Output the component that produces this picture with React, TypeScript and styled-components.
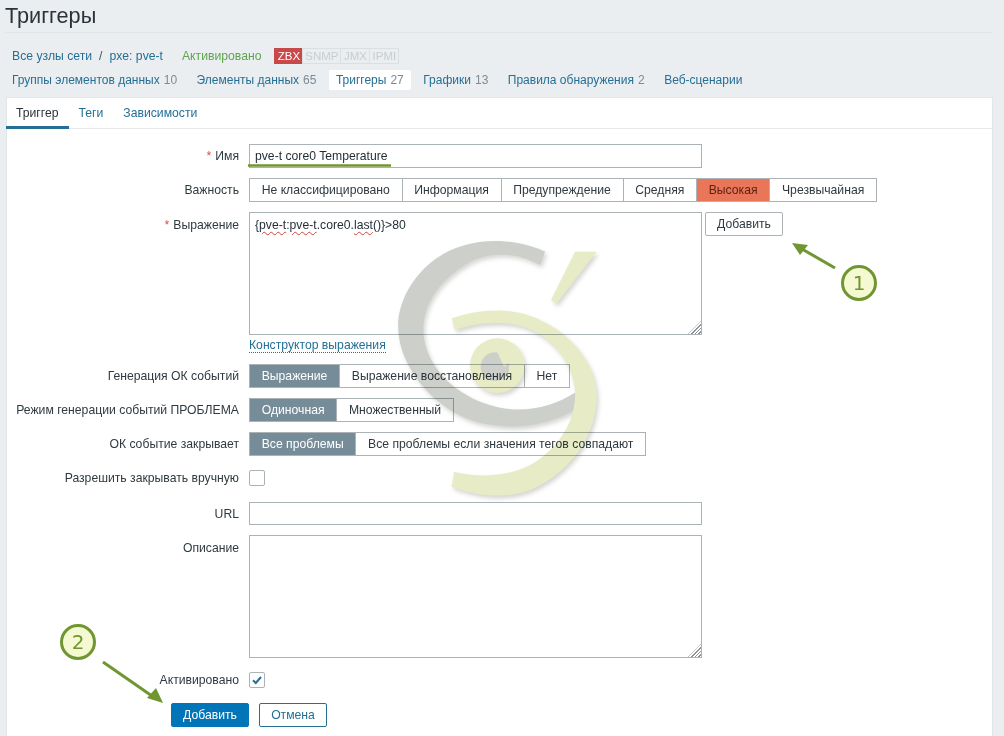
import styled, { createGlobalStyle } from 'styled-components';

const GlobalStyle = createGlobalStyle`
  html, body {
    margin: 0;
    height: 736px;
    overflow: hidden;
    background: #ebeef0;
    font-family: 'Liberation Sans', Arial, sans-serif;
    font-size: 12.2px;
    color: #1f2c33;
  }
`;

const Page = styled.div`
  position: relative;
  width: 1004px;
  height: 736px;
  overflow: hidden;
  padding-inline: 6px 11px;
  box-sizing: border-box;
`;

const Title = styled.h1`
  margin: 0 0 0 -1px;
  height: 33px;
  padding-top: 4px;
  box-sizing: border-box;
  font-size: 21.7px;
  line-height: 24px;
  font-weight: 400;
  color: #2b3338;
  border-bottom: 1px solid #e1e5e8;
`;

const HostRow = styled.div`
  display: flex;
  align-items: center;
  height: 16px;
  margin-top: 15px;
  padding-left: 6px;
`;

const NavLink = styled.a`
  color: #256f94;
  white-space: nowrap;
`;

const Separator = styled.span`
  margin-inline: 7px;
  color: #45525a;
`;

const Status = styled.span`
  margin-left: 19px;
  color: #5fa450;
`;

const Availability = styled.div`
  display: flex;
  margin-left: 13px;
`;

const Badge = styled.span<{ $on?: boolean; $width: number }>`
  width: ${({ $width }) => $width}px;
  height: 16px;
  box-sizing: border-box;
  display: flex;
  align-items: center;
  justify-content: center;
  font-size: 11.5px;
  color: ${({ $on }) => ($on ? '#ffffff' : '#c8cdd0')};
  background: ${({ $on }) => ($on ? '#c9484a' : 'transparent')};
  border: 1px solid ${({ $on }) => ($on ? '#c9484a' : '#dadfe2')};
  margin-left: ${({ $on }) => ($on ? 0 : -1)}px;
`;

const SubNav = styled.div`
  display: flex;
  gap: 5.5px;
  height: 20px;
  margin-top: 6px;
  margin-left: -1px;
  font-size: 12px;
`;

const SubNavItem = styled.div<{ $active?: boolean }>`
  display: flex;
  align-items: center;
  gap: 4px;
  padding-inline: 7px;
  border-radius: 2px;
  white-space: nowrap;
  background: ${({ $active }) => ($active ? '#ffffff' : 'transparent')};
`;

const Count = styled.span`
  color: #7d8b93;
`;

const Panel = styled.div`
  margin-top: 7px;
  height: 639px;
  background: #ffffff;
  border: 1px solid #e2e6e9;
  border-bottom: 0;
  box-sizing: border-box;
`;

const PanelTabs = styled.div`
  display: flex;
  height: 31px;
  margin-left: -1px;
  border-bottom: 1px solid #e6e9eb;
  box-sizing: border-box;
`;

const PanelTab = styled.a<{ $active?: boolean }>`
  display: flex;
  align-items: center;
  padding: 1px 10px 0;
  margin-bottom: -1px;
  color: ${({ $active }) => ($active ? '#2b3338' : '#256f94')};
  border-bottom: 3px solid ${({ $active }) => ($active ? '#256f94' : 'transparent')};
`;

const Form = styled.div`
  display: grid;
  grid-template-columns: 223px 1fr;
  column-gap: 10px;
  padding: 15px 0 0 9px;
`;

const Label = styled.div<{ $top?: boolean }>`
  height: 24px;
  padding-top: ${({ $top }) => ($top ? 6 : 0)}px;
  box-sizing: border-box;
  display: flex;
  align-items: ${({ $top }) => ($top ? 'flex-start' : 'center')};
  justify-content: flex-end;
  white-space: nowrap;
  color: #2f3a40;
`;

const Required = styled.span`
  color: #d9534f;
  margin-right: 4px;
`;

const Field = styled.div<{ $after?: number }>`
  margin-bottom: ${({ $after }) => $after ?? 10}px;
  min-width: 0;
`;

const TextInput = styled.input<{ $height?: number }>`
  display: block;
  width: 453px;
  height: ${({ $height }) => $height ?? 24}px;
  box-sizing: border-box;
  padding: 0 5px;
  border: 1px solid #acb3b7;
  border-radius: 0;
  font: inherit;
  color: #1f2c33;
  background: #ffffff;
  outline: none;
`;

const ExpressionRow = styled.div`
  display: flex;
  align-items: flex-start;
  gap: 3px;
`;

const AreaBox = styled.div`
  position: relative;
  width: 453px;
  height: 123px;
  box-sizing: border-box;
  padding: 5px;
  border: 1px solid #acb3b7;
  line-height: 14px;
  background: #ffffff;

  &::after {
    content: '';
    position: absolute;
    right: 0;
    bottom: 0;
    width: 13px;
    height: 13px;
    clip-path: polygon(100% 0, 100% 100%, 0 100%);
    background: repeating-linear-gradient(135deg, #8d9397 0 1.3px, #ffffff 1.3px 2.7px);
  }
`;

const Misspelt = styled.span`
  text-decoration: underline wavy #d0453c 1px;
  text-underline-offset: 2px;
`;

const BuilderLink = styled.a`
  display: inline-block;
  margin-top: 3px;
  line-height: 14px;
  color: #256f94;
  border-bottom: 1px dotted #256f94;
`;

const Segmented = styled.div`
  display: inline-flex;
  height: 24px;
  border: 1px solid #acb3b7;
  box-sizing: border-box;
  vertical-align: top;
`;

const Segment = styled.div<{ $selected?: 'blue' | 'high' }>`
  display: flex;
  align-items: center;
  padding-inline: 11.7px;
  white-space: nowrap;
  border-left: 1px solid #acb3b7;
  color: ${({ $selected }) =>
    $selected === 'blue' ? '#ffffff' : $selected === 'high' ? '#5c1f10' : '#2f3a40'};
  background: ${({ $selected }) =>
    $selected === 'blue' ? '#768d99' : $selected === 'high' ? '#e97659' : 'transparent'};

  &:first-child {
    border-left: 0;
  }
`;

const Button = styled.button<{ $variant?: 'primary' | 'outline' }>`
  height: 24px;
  padding: 0;
  width: ${({ $variant }) => ($variant === 'outline' ? 68 : 78)}px;
  font: inherit;
  border-radius: 2px;
  border: 1px solid
    ${({ $variant }) =>
      $variant === 'primary' ? '#0275b8' : $variant === 'outline' ? '#256f94' : '#acb3b7'};
  color: ${({ $variant }) =>
    $variant === 'primary' ? '#ffffff' : $variant === 'outline' ? '#256f94' : '#2f3a40'};
  background: ${({ $variant }) => ($variant === 'primary' ? '#0275b8' : '#ffffff')};
`;

const CheckBox = styled.div`
  width: 16px;
  height: 16px;
  margin-top: 4px;
  box-sizing: border-box;
  display: flex;
  align-items: center;
  justify-content: center;
  border: 1px solid #acb3b7;
  border-radius: 2px;
  background: #ffffff;
`;

const Actions = styled.div`
  display: flex;
  gap: 10px;
  margin-left: 155px;
  margin-top: 5px;
  grid-column: 1 / -1;
`;

const Watermark = styled.svg`
  position: absolute;
  left: 380px;
  top: 220px;
  mix-blend-mode: multiply;
  pointer-events: none;
  filter: drop-shadow(2px 3px 2px rgba(90, 92, 84, 0.25));
`;

const Annotations = styled.svg`
  position: absolute;
  left: 0;
  top: 0;
  pointer-events: none;
`;

const Callout = styled.div<{ $x: number; $y: number }>`
  position: absolute;
  left: ${({ $x }) => $x}px;
  top: ${({ $y }) => $y}px;
  width: 36px;
  height: 36px;
  box-sizing: border-box;
  display: flex;
  align-items: center;
  justify-content: center;
  border: 3px solid #6f9630;
  border-radius: 50%;
  background: #f5f9d2;
  color: #6f9630;
  font-family: 'DejaVu Sans', sans-serif;
  font-size: 20px;
`;

export default function App() {
  return (
    <Page>
      <GlobalStyle />
      <Title>Триггеры</Title>

      <HostRow>
        <NavLink>Все узлы сети</NavLink>
        <Separator>/</Separator>
        <NavLink>pxe: pve-t</NavLink>
        <Status>Активировано</Status>
        <Availability>
          <Badge $on $width={29}>ZBX</Badge>
          <Badge $width={39}>SNMP</Badge>
          <Badge $width={30}>JMX</Badge>
          <Badge $width={30}>IPMI</Badge>
        </Availability>
      </HostRow>

      <SubNav>
        <SubNavItem>
          <NavLink>Группы элементов данных</NavLink>
          <Count>10</Count>
        </SubNavItem>
        <SubNavItem>
          <NavLink>Элементы данных</NavLink>
          <Count>65</Count>
        </SubNavItem>
        <SubNavItem $active>
          <NavLink>Триггеры</NavLink>
          <Count>27</Count>
        </SubNavItem>
        <SubNavItem>
          <NavLink>Графики</NavLink>
          <Count>13</Count>
        </SubNavItem>
        <SubNavItem>
          <NavLink>Правила обнаружения</NavLink>
          <Count>2</Count>
        </SubNavItem>
        <SubNavItem>
          <NavLink>Веб-сценарии</NavLink>
        </SubNavItem>
      </SubNav>

      <Panel>
        <PanelTabs>
          <PanelTab $active>Триггер</PanelTab>
          <PanelTab>Теги</PanelTab>
          <PanelTab>Зависимости</PanelTab>
        </PanelTabs>

        <Form>
          <Label>
            <Required>*</Required>Имя
          </Label>
          <Field>
            <TextInput readOnly value="pve-t core0 Temperature" />
          </Field>

          <Label>Важность</Label>
          <Field>
            <Segmented>
              <Segment>Не классифицировано</Segment>
              <Segment>Информация</Segment>
              <Segment>Предупреждение</Segment>
              <Segment>Средняя</Segment>
              <Segment $selected="high">Высокая</Segment>
              <Segment>Чрезвычайная</Segment>
            </Segmented>
          </Field>

          <Label $top>
            <Required>*</Required>Выражение
          </Label>
          <Field $after={11}>
            <ExpressionRow>
              <AreaBox>
                {'{'}
                <Misspelt>pve-t</Misspelt>:<Misspelt>pve-t</Misspelt>.core0.<Misspelt>last</Misspelt>
                {'()}>80'}
              </AreaBox>
              <Button>Добавить</Button>
            </ExpressionRow>
            <BuilderLink>Конструктор выражения</BuilderLink>
          </Field>

          <Label>Генерация ОК событий</Label>
          <Field>
            <Segmented>
              <Segment $selected="blue">Выражение</Segment>
              <Segment>Выражение восстановления</Segment>
              <Segment>Нет</Segment>
            </Segmented>
          </Field>

          <Label>Режим генерации событий ПРОБЛЕМА</Label>
          <Field>
            <Segmented>
              <Segment $selected="blue">Одиночная</Segment>
              <Segment>Множественный</Segment>
            </Segmented>
          </Field>

          <Label>ОК событие закрывает</Label>
          <Field>
            <Segmented>
              <Segment $selected="blue">Все проблемы</Segment>
              <Segment>Все проблемы если значения тегов совпадают</Segment>
            </Segmented>
          </Field>

          <Label>Разрешить закрывать вручную</Label>
          <Field $after={16}>
            <CheckBox />
          </Field>

          <Label>URL</Label>
          <Field>
            <TextInput readOnly value="" $height={23} />
          </Field>

          <Label $top>Описание</Label>
          <Field>
            <AreaBox />
          </Field>

          <Label>Активировано</Label>
          <Field>
            <CheckBox>
              <svg width="12" height="12" viewBox="0 0 12 12" fill="none">
                <path d="M2 6.2 L4.8 9 L10 3" stroke="#256f94" strokeWidth="2" />
              </svg>
            </CheckBox>
          </Field>

          <Actions>
            <Button $variant="primary">Добавить</Button>
            <Button $variant="outline">Отмена</Button>
          </Actions>
        </Form>
      </Panel>

      <Watermark width="240" height="290" viewBox="0 0 720 870">
        <path
          fill="#cdcfca"
          d="M495 95 C400 50 250 45 150 130 C80 190 50 270 55 330 C60 450 180 590 320 612 C420 632 520 610 600 560 L590 515 C500 572 400 585 300 545 C190 500 130 410 130 330 C130 240 190 170 270 125 C340 90 420 100 480 135 Z"
        />
        <path
          fill="#e8ecc6"
          d="M215 295 C300 265 400 260 480 300 C590 350 655 450 650 540 C645 650 570 760 450 810 C370 840 280 825 215 800 L222 755 C300 775 390 770 460 730 C540 680 590 600 585 510 C578 430 520 350 430 320 C360 300 280 310 225 330 Z"
        />
        <path fill="#e8ecc6" d="M585 95 H650 L530 250 L513 240 Z" />
        <circle cx="352" cy="437" r="82" fill="#e8ecc6" />
        <circle cx="345" cy="440" r="43" fill="#cdcfca" />
        <path fill="#e8ecc6" d="M352 396 L372 440 L392 425 L380 395 Z" />
      </Watermark>

      <Annotations width="1004" height="736" viewBox="0 0 1004 736">
        <path d="M248 165.5 H391" stroke="#6f9630" strokeWidth="2.5" />
        <path d="M835 268 L802 249" stroke="#6f9630" strokeWidth="3" />
        <path d="M792 243 L808 245 L800 255 Z" fill="#6f9630" />
        <path d="M103 662 L152 696" stroke="#6f9630" strokeWidth="3" />
        <path d="M163 703 L147 698 L156 688 Z" fill="#6f9630" />
      </Annotations>
      <Callout $x={841} $y={265}>1</Callout>
      <Callout $x={60} $y={624}>2</Callout>
    </Page>
  );
}
